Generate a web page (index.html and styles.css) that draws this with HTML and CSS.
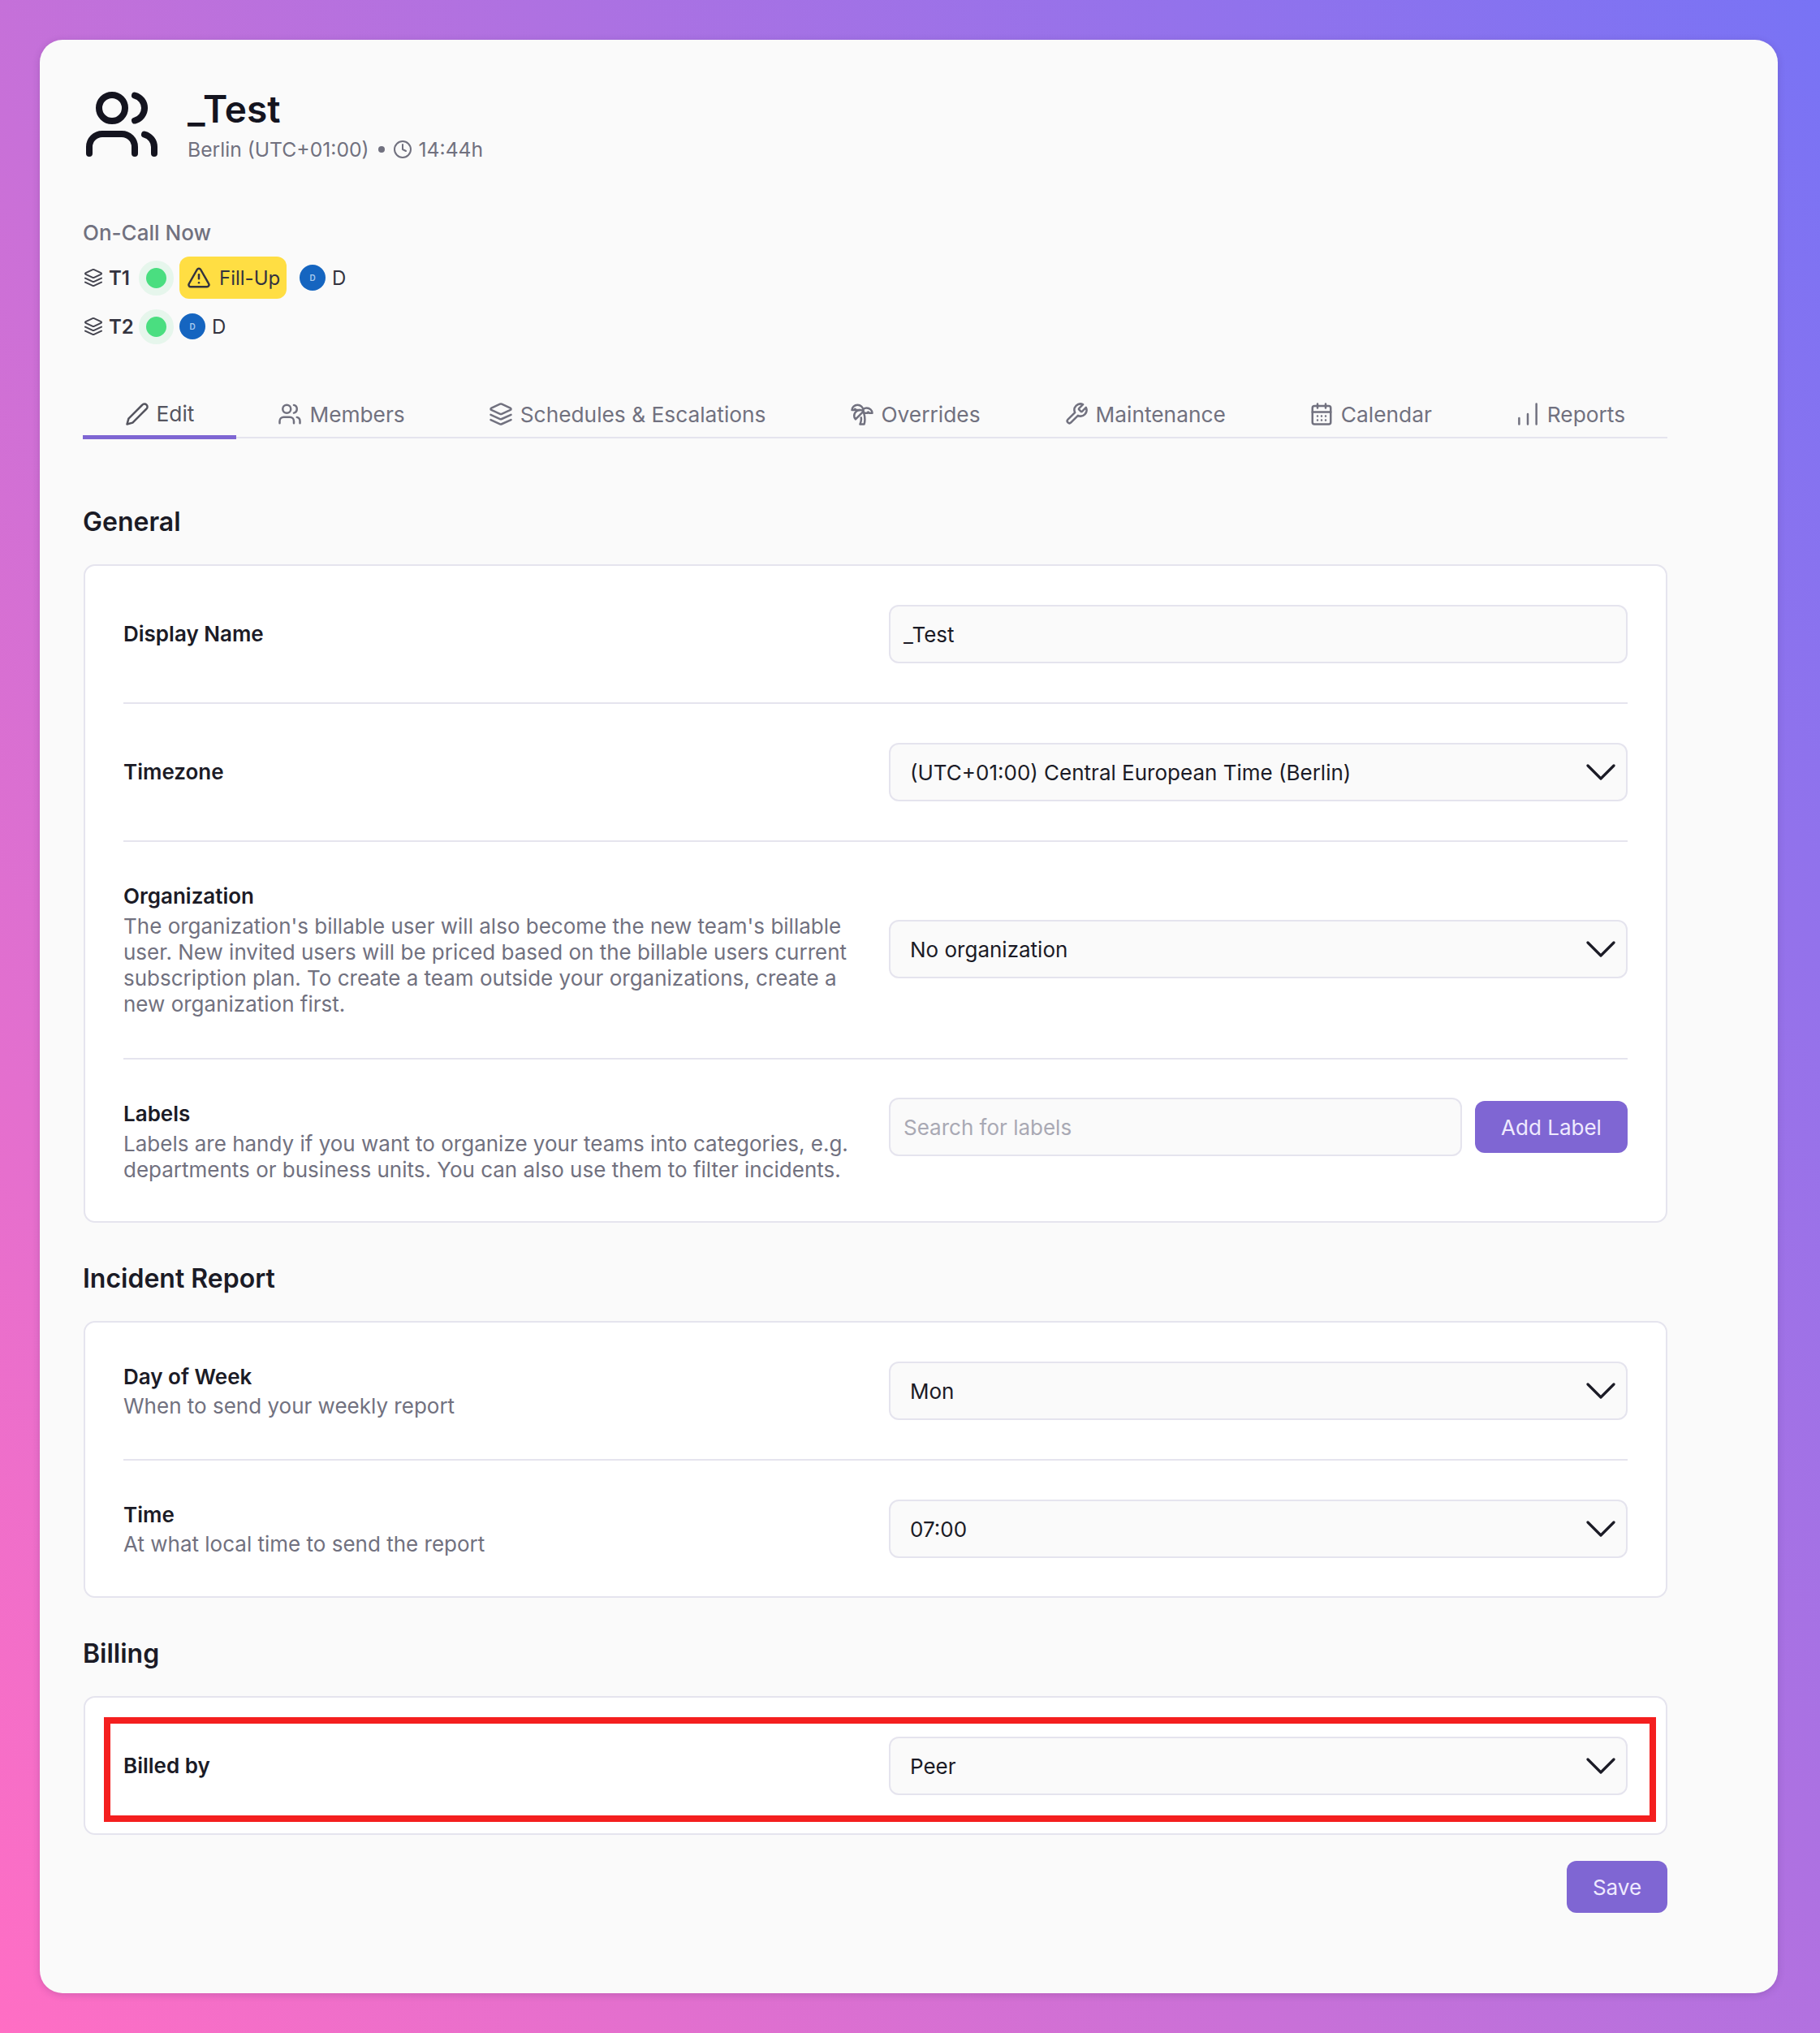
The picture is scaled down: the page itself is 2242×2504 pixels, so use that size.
FILE: index.html
```html
<!DOCTYPE html>
<html lang="en">
<head>
    <meta charset="UTF-8">
    <title>_Test - Team</title>
    <link rel="stylesheet" href="styles.css">
</head>
<body>
    <svg class="sprite" width="0" height="0">
        <defs>
            <symbol id="i-users" viewBox="0 0 24 24"><path d="M16 21v-2a4 4 0 0 0-4-4H6a4 4 0 0 0-4 4v2"/><circle cx="9" cy="7" r="4"/><path d="M22 21v-2a4 4 0 0 0-3-3.87"/><path d="M16 3.13a4 4 0 0 1 0 7.75"/></symbol>
            <symbol id="i-layers" viewBox="0 0 24 24"><path d="M12.83 2.18a2 2 0 0 0-1.66 0L2.6 6.08a1 1 0 0 0 0 1.83l8.58 3.91a2 2 0 0 0 1.66 0l8.58-3.9a1 1 0 0 0 0-1.83Z"/><path d="m22 17.65-9.17 4.16a2 2 0 0 1-1.66 0L2 17.65"/><path d="m22 12.65-9.17 4.16a2 2 0 0 1-1.66 0L2 12.65"/></symbol>
            <symbol id="i-chevron" viewBox="0 0 36 22"><path d="M2 3 18 19 34 3"/></symbol>
        </defs>
    </svg>

    <main class="card">
        <!-- Team header -->
        <header class="team-head">
            <svg class="team-icon"><use href="#i-users"/></svg>
            <div>
                <h1>_Test</h1>
                <p class="team-meta">
                    Berlin (UTC+01:00)
                    <span class="meta-dot"></span>
                    <svg class="clock" viewBox="0 0 24 24"><circle cx="12" cy="12" r="10"/><path d="M12 6v6l4 2"/></svg>
                    14:44h
                </p>
            </div>
        </header>

        <!-- On-call -->
        <h2 class="oncall-title">On-Call Now</h2>
        <div class="oncall-row">
            <svg class="layer-icon"><use href="#i-layers"/></svg>
            <span class="tier">T1</span>
            <span class="status"></span>
            <span class="fillup">
                <svg viewBox="0 0 24 24"><path d="m21.73 18-8-14a2 2 0 0 0-3.48 0l-8 14A2 2 0 0 0 4 21h16a2 2 0 0 0 1.73-3"/><path d="M12 9v4"/><path d="M12 17h.01"/></svg>
                Fill-Up
            </span>
            <span class="avatar avatar-gap">D</span>
            <span class="person">D</span>
        </div>
        <div class="oncall-row row-two">
            <svg class="layer-icon"><use href="#i-layers"/></svg>
            <span class="tier">T2</span>
            <span class="status"></span>
            <span class="avatar">D</span>
            <span class="person">D</span>
        </div>

        <!-- Tabs -->
        <nav class="tabs">
            <a class="tab active"><svg viewBox="0 0 24 24"><path d="M17 3a2.85 2.83 0 1 1 4 4L7.5 20.5 2 22l1.5-5.5Z"/></svg>Edit</a>
            <a class="tab"><svg><use href="#i-users"/></svg>Members</a>
            <a class="tab"><svg><use href="#i-layers"/></svg>Schedules &amp; Escalations</a>
            <a class="tab"><svg viewBox="0 0 24 24"><path d="M13 8c0-2.76-2.46-5-5.5-5S2 5.24 2 8h2l1-1 1 1h4"/><path d="M13 7.14A5.82 5.82 0 0 1 16.5 6c3.04 0 5.5 2.24 5.5 5h-3l-1-1-1 1h-3"/><path d="M5.89 9.71c-2.15 2.15-2.3 5.47-.35 7.43l4.24-4.25.7-.7.71-.71 2.12-2.12c-1.95-1.96-5.27-1.8-7.42.35"/><path d="M11 15.5c.5 2.5-.17 4.5-1 6.5h4c2-5.5-.5-12-1-14"/></svg>Overrides</a>
            <a class="tab"><svg viewBox="0 0 24 24"><path d="M14.7 6.3a1 1 0 0 0 0 1.4l1.6 1.6a1 1 0 0 0 1.4 0l3.77-3.77a6 6 0 0 1-7.94 7.94l-6.91 6.91a2.12 2.12 0 0 1-3-3l6.91-6.91a6 6 0 0 1 7.94-7.94l-3.76 3.76z"/></svg>Maintenance</a>
            <a class="tab"><svg viewBox="0 0 24 24"><rect x="3" y="4" width="18" height="18" rx="2"/><path d="M16 2v4M8 2v4M3 10h18M8 14h.01M12 14h.01M16 14h.01M8 18h.01M12 18h.01M16 18h.01"/></svg>Calendar</a>
            <a class="tab"><svg viewBox="0 0 24 24"><path d="M3.5 22v-6M12 22V12M20.5 22V2"/></svg>Reports</a>
        </nav>

        <!-- General -->
        <h2 class="section-title first">General</h2>
        <section class="box">
            <div class="row">
                <div class="row-text"><h3>Display Name</h3></div>
                <div class="field input-text">_Test</div>
            </div>
            <div class="row">
                <div class="row-text"><h3>Timezone</h3></div>
                <div class="field select">(UTC+01:00) Central European Time (Berlin)<svg class="chevron"><use href="#i-chevron"/></svg></div>
            </div>
            <div class="row row-tall">
                <div class="row-text">
                    <h3>Organization</h3>
                    <p>The organization's billable user will also become the new team's billable user. New invited users will be priced based on the billable users current subscription plan. To create a team outside your organizations, create a new organization first.</p>
                </div>
                <div class="field select">No organization<svg class="chevron"><use href="#i-chevron"/></svg></div>
            </div>
            <div class="row row-tall">
                <div class="row-text">
                    <h3>Labels</h3>
                    <p>Labels are handy if you want to organize your teams into categories, e.g. departments or business units. You can also use them to filter incidents.</p>
                </div>
                <div class="label-search">
                    <div class="field input-text placeholder">Search for labels</div>
                    <button class="btn add-label">Add Label</button>
                </div>
            </div>
        </section>

        <!-- Incident Report -->
        <h2 class="section-title">Incident Report</h2>
        <section class="box">
            <div class="row">
                <div class="row-text">
                    <h3>Day of Week</h3>
                    <p>When to send your weekly report</p>
                </div>
                <div class="field select">Mon<svg class="chevron"><use href="#i-chevron"/></svg></div>
            </div>
            <div class="row">
                <div class="row-text">
                    <h3>Time</h3>
                    <p>At what local time to send the report</p>
                </div>
                <div class="field select">07:00<svg class="chevron"><use href="#i-chevron"/></svg></div>
            </div>
        </section>

        <!-- Billing -->
        <h2 class="section-title">Billing</h2>
        <section class="box">
            <div class="highlight"></div>
            <div class="row">
                <div class="row-text"><h3>Billed by</h3></div>
                <div class="field select">Peer<svg class="chevron"><use href="#i-chevron"/></svg></div>
            </div>
        </section>

        <div class="actions">
            <button class="btn save">Save</button>
        </div>
    </main>
</body>
</html>
```

FILE: styles.css
```css
/* Page */
body {
    margin: 0;
    min-height: 2504px;
    box-sizing: border-box;
    padding: 49px 52px 49px 49px;
    background: linear-gradient(56deg, #ff6ec4, #7873f5);
    font-family: "Inter", "Liberation Sans", sans-serif;
    color: #1b1b26;
}

.sprite {
    position: absolute;
}

svg {
    fill: none;
    stroke: currentColor;
    stroke-width: 2;
    stroke-linecap: round;
    stroke-linejoin: round;
    flex: none;
}

.card {
    box-sizing: border-box;
    height: 2406px;
    padding: 56px 136px 0 53px;
    background-color: #fafafa;
    border-radius: 28px;
    box-shadow: 0 2px 10px rgba(60, 30, 90, 0.2);
}

/* Team header */
.team-head {
    display: flex;
    height: 96px;
}

.team-icon {
    width: 96px;
    height: 96px;
    margin-right: 33px;
    color: #14141f;
}

.team-head h1 {
    margin: 0;
    padding-top: 5px;
    font-size: 46px;
    line-height: 48px;
    font-weight: 600;
    color: #14141f;
}

.team-meta {
    display: flex;
    align-items: center;
    margin: 10px 0 0;
    font-size: 24.7px;
    line-height: 32px;
    color: #71717f;
}

.meta-dot {
    width: 8px;
    height: 8px;
    margin: 0 10px 0 11px;
    border-radius: 50%;
    background-color: #71717f;
}

.clock {
    width: 24px;
    height: 24px;
    margin-right: 8px;
}

/* On-call */
.oncall-title {
    margin: 70px 0 13px;
    font-size: 26px;
    line-height: 32px;
    font-weight: 500;
    color: #71717f;
}

.oncall-row {
    display: flex;
    align-items: center;
    height: 52px;
    font-size: 24px;
    color: #33333f;
}

.row-two {
    margin-top: 8px;
}

.layer-icon {
    width: 24px;
    height: 24px;
    margin-left: 1px;
    margin-right: 7px;
    color: #44444f;
}

.tier {
    min-width: 37px;
    font-weight: 600;
}

.status {
    box-sizing: content-box;
    width: 25px;
    height: 25px;
    margin-right: 7px;
    border: 9px solid #e6f6ec;
    border-radius: 50%;
    background-color: #4ade80;
}

.fillup {
    display: flex;
    align-items: center;
    gap: 10px;
    box-sizing: border-box;
    width: 132px;
    height: 52px;
    padding-left: 9px;
    border-radius: 12px;
    background-color: #ffde43;
}

.fillup svg {
    width: 30px;
    height: 30px;
}

.avatar {
    display: flex;
    align-items: center;
    justify-content: center;
    width: 32px;
    height: 32px;
    border-radius: 50%;
    background-color: #1565c0;
    color: #a8cbef;
    font-size: 10px;
    font-weight: 600;
}

.avatar-gap {
    margin-left: 16px;
}

.person {
    margin-left: 8px;
}

/* Tabs */
.tabs {
    display: flex;
    height: 56px;
    margin-top: 54px;
    border-bottom: 2px solid #e5e4ee;
}

.tab {
    display: flex;
    align-items: center;
    gap: 9px;
    height: 56px;
    padding: 0 51.5px;
    font-size: 26.3px;
    color: #71717f;
    white-space: nowrap;
}

.tab svg {
    width: 30px;
    height: 30px;
}

.tab.active {
    height: 59px;
    box-sizing: border-box;
    padding-top: 1px;
    border-bottom: 5px solid #7f66d3;
    color: #55555f;
}

/* Sections */
.section-title {
    margin: 49px 0 32px;
    font-size: 32px;
    line-height: 40px;
    font-weight: 600;
    color: #1b1b26;
}

.section-title.first {
    margin-top: 83px;
}

.box {
    position: relative;
    margin-left: 1px;
    padding: 0 47px;
    background-color: #fff;
    border: 2px solid #e5e4ee;
    border-radius: 14px;
}

.row {
    display: grid;
    grid-template-columns: 1fr 910px;
    column-gap: 34px;
    align-items: center;
    padding: 48px 0;
    border-bottom: 2px solid #e5e4ee;
}

.row-tall {
    padding: 47px 0 49px;
}

.row:last-child {
    padding-bottom: 47px;
    border-bottom: 0;
}

.row-tall:last-child {
    padding-bottom: 46px;
}

.row-tall .row-text {
    padding: 3px 0 1px;
}

.row-text h3 {
    margin: 0;
    font-size: 26px;
    line-height: 34px;
    font-weight: 600;
    color: #1b1b26;
}

.row-text p {
    margin: 3px 0 0;
    font-size: 26px;
    line-height: 32px;
    color: #71717f;
}

.row-tall p {
    margin-top: 4px;
}

/* Fields */
.field {
    display: flex;
    align-items: center;
    justify-content: space-between;
    box-sizing: border-box;
    height: 72px;
    background-color: #fafafa;
    border: 2px solid #e5e4ee;
    border-radius: 12px;
    font-size: 26px;
    color: #1b1b26;
}

.select {
    padding: 0 13px 0 24px;
}

.input-text {
    padding: 0 16px;
}

.placeholder {
    flex: 1;
    color: #a9a9b4;
}

.chevron {
    width: 36px;
    height: 22px;
    stroke-width: 3.2;
}

.label-search {
    display: flex;
    align-items: center;
    align-self: start;
    gap: 16px;
}

/* Buttons */
.btn {
    height: 64px;
    border: 0;
    border-radius: 12px;
    background-color: #7f66d3;
    color: #efeaff;
    font-family: inherit;
    font-size: 26px;
}

.add-label {
    width: 188px;
}

.save {
    width: 124px;
}

.actions {
    display: flex;
    justify-content: flex-end;
    margin-top: 32px;
}

/* Red annotation round the billing row */
.highlight {
    position: absolute;
    top: 24px;
    left: 23px;
    right: 12px;
    bottom: 14px;
    border: 8px solid #f41f1f;
}
```
